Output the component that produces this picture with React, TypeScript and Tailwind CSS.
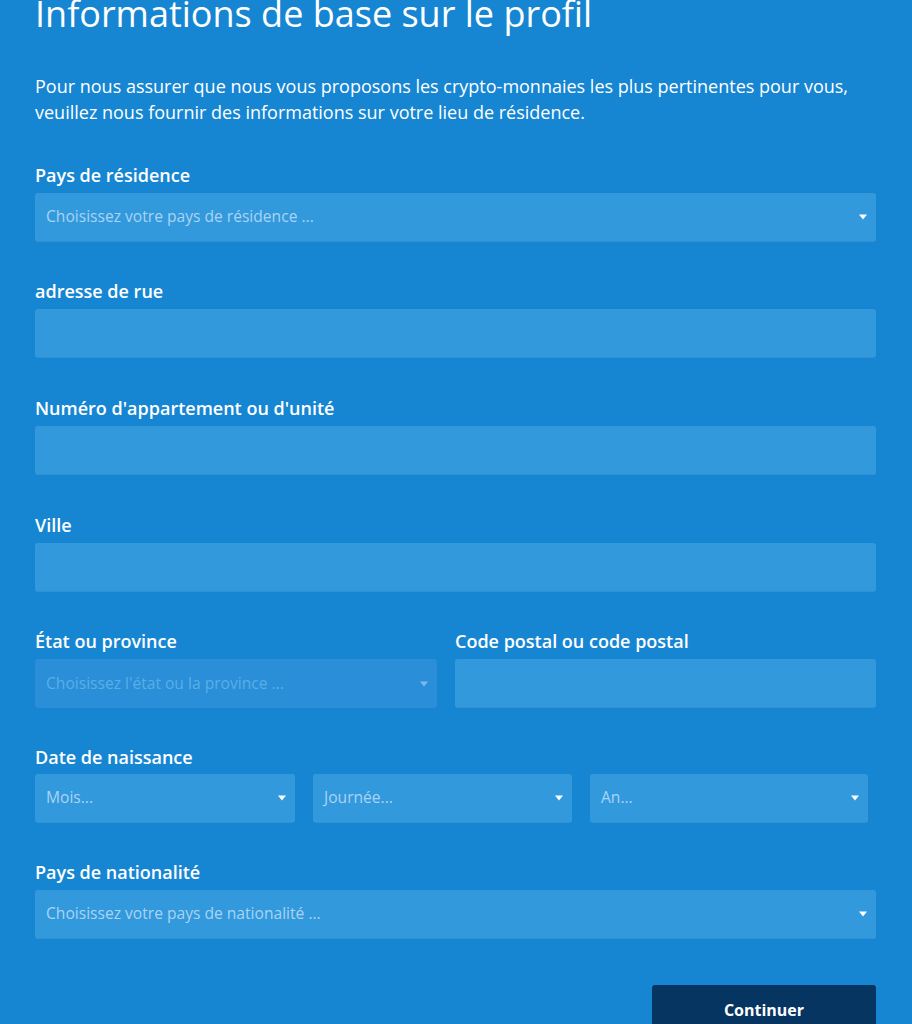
import React from 'react';

function Caret({ faded = false }: { faded?: boolean }) {
  return (
    <svg
      width="8"
      height="6"
      viewBox="0 0 8 6"
      className={faded ? 'text-white/40' : 'text-white'}
    >
      <path d="M0 0.5h8L4 5.5z" fill="currentColor" />
    </svg>
  );
}

function Label({ children, tight = false }: { children: React.ReactNode; tight?: boolean }) {
  return (
    <label
      className={`block text-[18px] leading-6 font-semibold text-white ${
        tight ? 'mb-[5px]' : 'mb-[6px]'
      }`}
    >
      {children}
    </label>
  );
}

function TextInput() {
  return (
    <div className="h-[49px] w-full rounded-[3px] bg-[#3399dd] border-b border-[#2f92d6]" />
  );
}

function Select({
  placeholder,
  disabled = false,
}: {
  placeholder: string;
  disabled?: boolean;
}) {
  return (
    <div
      className={`h-[49px] w-full rounded-[3px] flex items-center justify-between pl-[11px] pr-[9px] ${
        disabled ? 'bg-[#2a8ed9]' : 'bg-[#3399dd] border-b border-[#2f92d6]'
      }`}
    >
      <span
        className={`text-[15.6px] ${disabled ? 'text-[#5aaee6]' : 'text-[#a9d4f3]'}`}
      >
        {placeholder}
      </span>
      <Caret faded={disabled} />
    </div>
  );
}

export default function App() {
  return (
    <div
      className="min-h-screen bg-[#1686d3] text-white"
      style={{ fontFamily: '"Open Sans", "Liberation Sans", sans-serif' }}
    >
      <div className="px-[35px] pr-[36px] pb-10">
        <h1 className="-mt-[4px] text-[36px] leading-9 font-normal">
          Informations de base sur le profil
        </h1>

        <p className="mt-[41px] text-[18px] leading-[26px] text-white">
          Pour nous assurer que nous vous proposons les crypto-monnaies les plus pertinentes pour vous,
          veuillez nous fournir des informations sur votre lieu de résidence.
        </p>

        <div className="mt-[38px] flex flex-col">
          <div>
            <Label>Pays de résidence</Label>
            <Select placeholder="Choisissez votre pays de résidence ..." />
          </div>

          <div className="mt-[37px]">
            <Label>adresse de rue</Label>
            <TextInput />
          </div>

          <div className="mt-[38px]">
            <Label>Numéro d'appartement ou d'unité</Label>
            <TextInput />
          </div>

          <div className="mt-[38px]">
            <Label>Ville</Label>
            <TextInput />
          </div>

          <div className="mt-[37px] grid grid-cols-[402px_1fr] gap-[18px]">
            <div>
              <Label>État ou province</Label>
              <Select placeholder="Choisissez l'état ou la province ..." disabled />
            </div>
            <div>
              <Label>Code postal ou code postal</Label>
              <TextInput />
            </div>
          </div>

          <div className="mt-[37px]">
            <Label tight>Date de naissance</Label>
            <div className="flex gap-[18px]">
              <div className="w-[260px]">
                <Select placeholder="Mois..." />
              </div>
              <div className="w-[259px]">
                <Select placeholder="Journée..." />
              </div>
              <div className="w-[278px]">
                <Select placeholder="An..." />
              </div>
            </div>
          </div>

          <div className="mt-[37px]">
            <Label>Pays de nationalité</Label>
            <Select placeholder="Choisissez votre pays de nationalité ..." />
          </div>
        </div>

        <div className="mt-[46px] flex justify-end">
          <button className="w-[224px] h-[50px] rounded-[3px] bg-[#053560] text-white text-[16px] font-bold">
            Continuer
          </button>
        </div>
      </div>
    </div>
  );
}
